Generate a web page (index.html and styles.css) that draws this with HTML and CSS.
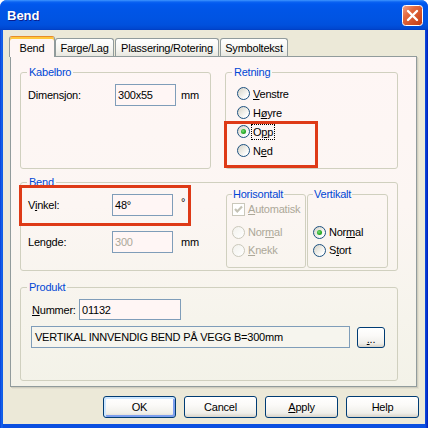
FILE: index.html
```html
<!DOCTYPE html>
<html>
<head>
<meta charset="utf-8">
<title>Bend</title>
<link rel="stylesheet" href="styles.css">
</head>
<body>
<div class="window">
  <div class="titlebar">
    <span class="title">Bend</span>
    <svg class="close" width="21" height="21" viewBox="0 0 21 21">
      <defs>
        <linearGradient id="cbg" x1="0" y1="0" x2="1" y2="1">
          <stop offset="0" stop-color="#F2A58C"/>
          <stop offset="0.35" stop-color="#E3693F"/>
          <stop offset="1" stop-color="#C23810"/>
        </linearGradient>
      </defs>
      <rect x="0.5" y="0.5" width="20" height="20" rx="3" fill="url(#cbg)" stroke="#fff"/>
      <path d="M6 6 L15 15 M15 6 L6 15" stroke="#fff" stroke-width="2.4" stroke-linecap="round"/>
    </svg>
  </div>
  <div class="client">
    <div class="tabs">
      <div class="tab active t1">Bend</div>
      <div class="tab t2">Farge/Lag</div>
      <div class="tab t3">Plassering/Rotering</div>
      <div class="tab t4">Symboltekst</div>
    </div>
    <div class="panel">
      <div class="row1">
        <fieldset class="group kabelbro">
          <legend>Kabelbro</legend>
          <div class="gbody kb-body">
            <div class="field">
              <span class="lbl lbl-dim">Dimensjon:</span>
              <span class="input in-dim">300x55</span>
              <span class="unit">mm</span>
            </div>
          </div>
        </fieldset>
        <fieldset class="group retning">
          <legend>Retning</legend>
          <div class="gbody ret-body">
            <div class="radio"><span class="rb"></span><span class="rt"><u>V</u>enstre</span></div>
            <div class="radio"><span class="rb"></span><span class="rt">H<u>ø</u>yre</span></div>
            <div class="radio"><span class="rb checked"></span><span class="rt focus">O<u>p</u>p</span></div>
            <div class="radio"><span class="rb"></span><span class="rt">N<u>e</u>d</span></div>
          </div>
        </fieldset>
      </div>

      <fieldset class="group bend">
        <legend>Bend</legend>
        <div class="bend-body">
          <div class="bend-left">
            <div class="field f-vinkel">
              <span class="lbl lbl-bend">V<u>i</u>nkel:</span>
              <span class="input in-bend">48°</span>
              <span class="unit unit-bend deg">°</span>
            </div>
            <div class="field f-lengde">
              <span class="lbl lbl-bend">Lengde:</span>
              <span class="input in-bend disabled">300</span>
              <span class="unit unit-bend">mm</span>
            </div>
          </div>
          <fieldset class="group horis">
            <legend>Horisontalt</legend>
            <div class="gbody hor-body">
              <div class="check disabled">
                <span class="cb"><svg width="11" height="11" viewBox="0 0 11 11"><path d="M2 5 L4.3 7.5 L9 2.5" fill="none" stroke="#C4C2B4" stroke-width="2.2"/></svg></span>
                <span class="rt"><u>A</u>utomatisk</span>
              </div>
              <div class="radio disabled r-first"><span class="rb"></span><span class="rt">Nor<u>m</u>al</span></div>
              <div class="radio disabled"><span class="rb"></span><span class="rt"><u>K</u>nekk</span></div>
            </div>
          </fieldset>
          <fieldset class="group vert">
            <legend>Vertikalt</legend>
            <div class="gbody vert-body">
              <div class="radio"><span class="rb checked"></span><span class="rt">Nor<u>m</u>al</span></div>
              <div class="radio"><span class="rb"></span><span class="rt">S<u>t</u>ort</span></div>
            </div>
          </fieldset>
        </div>
      </fieldset>

      <fieldset class="group produkt">
        <legend>Produkt</legend>
        <div class="gbody prod-body">
          <div class="field f-num">
            <span class="lbl lbl-num"><u>N</u>ummer:</span>
            <span class="input in-num">01132</span>
          </div>
          <div class="desc-row">
            <span class="input desc">VERTIKAL INNVENDIG BEND PÅ VEGG B=300mm</span>
            <span class="btn small"><u>.</u>..</span>
          </div>
        </div>
      </fieldset>

      <div class="mark mark1"></div>
      <div class="mark mark2"></div>
    </div>
    <div class="buttons">
      <span class="btn default">OK</span>
      <span class="btn">Cancel</span>
      <span class="btn"><u>A</u>pply</span>
      <span class="btn">Help</span>
    </div>
  </div>
</div>
</body>
</html>
```

FILE: styles.css
```css
* { box-sizing: border-box; }
html, body { margin: 0; padding: 0; }
body {
  width: 428px;
  height: 428px;
  background: #ffffff;
  font-family: "Liberation Sans", Arial, sans-serif;
  font-size: 11px;
  letter-spacing: -0.22px;
  color: #000;
  overflow: hidden;
}
u { text-decoration: underline; text-decoration-thickness: 1px; text-underline-offset: 1px; }

.window {
  width: 428px;
  height: 428px;
  display: flex;
  flex-direction: column;
  background: linear-gradient(to right, #0A3FD8 0, #166AEE 2px, #0A4FE0 3px, #0A4FE0 425px, #0A3CD6 426px, #0021B8 428px);
  border-radius: 7px 7px 0 0;
  overflow: hidden;
}

.titlebar {
  height: 30px;
  flex: none;
  display: flex;
  align-items: center;
  justify-content: space-between;
  padding: 0 5px 0 7px;
  background: linear-gradient(#3E95FF 0, #0A62F2 2px, #0058EE 4px, #0055E7 10px, #0054E3 18px, #0050DD 25px, #0046CF 29px, #003BBE 30px);
}
.title {
  color: #fff;
  font-weight: bold;
  font-size: 13px;
  letter-spacing: 0;
  text-shadow: 1px 1px 0 #0A1E8E;
  margin-top: 1px;
}
.close { display: block; }

.client {
  flex: 1;
  margin: 0 3px 4px 3px;
  background: #ECE9D8;
  padding-top: 6px;
  display: flex;
  flex-direction: column;
}

/* tabs */
.tabs {
  display: flex;
  align-items: flex-start;
  height: 20px;
  margin-left: 6px;
  position: relative;
  z-index: 2;
}
.tab {
  height: 18px;
  margin-top: 2px;
  border: 1px solid #919B9C;
  border-bottom: none;
  border-radius: 3px 3px 0 0;
  background: linear-gradient(#FFFFFF, #F6F5F1 60%, #E8E7E0);
  display: flex;
  align-items: center;
  justify-content: center;
  padding-top: 1px;
}
.tab.active {
  height: 21px;
  margin-top: 0;
  background: #FEF6F5;
  border-top: 1px solid #E68B2C;
  box-shadow: inset 0 2px 0 #FFC83C;
  padding-top: 1px;
  align-items: center;
}
.t1 { width: 46px; }
.t2 { width: 59px; }
.t3 { width: 104px; margin-left: 1px; }
.t4 { width: 68px; margin-left: 1px; }

/* panel */
.panel {
  position: relative;
  margin-left: 7px;
  width: 407px;
  height: 331px;
  flex: none;
  border: 1px solid #919B9C;
  background: linear-gradient(#FEF6F5 0%, #FCF6F3 45%, #F6F4EC 80%, #F3F2E8 100%);
  box-shadow: 1px 1px 0 #D0CEBF, 2px 2px 0 #E2DFD0;
  padding: 9px 0 0 9px;
  display: flex;
  flex-direction: column;
}

.group {
  margin: 0;
  padding: 0;
  border: 1px solid #D0D0BF;
  border-radius: 3px;
  min-width: 0;
}
.group legend {
  padding: 0 2px;
  margin-left: 6px;
  line-height: 13px;
  color: #0046D5;
}

.row1 { display: flex; }
.kabelbro { width: 191px; height: 103px; }
.retning { width: 173px; height: 103px; margin-left: 14px; }

.kb-body { padding: 5px 0 0 7px; }
.ret-body { padding: 5px 0 0 11px; }

.field { display: flex; align-items: center; height: 22px; }
.lbl { flex: none; }
.lbl-dim { width: 87px; }
.input {
  flex: none;
  display: flex;
  align-items: center;
  height: 22px;
  border: 1px solid #7F9DB9;
  background: #FFF6F5;
  padding-left: 2px;
  white-space: nowrap;
}
.input.disabled { color: #ACA899; }
.in-dim { width: 61px; }
.unit { margin-left: 5px; }

/* radios */
.radio, .check { display: flex; align-items: center; height: 19px; }
.rb {
  flex: none;
  position: relative;
  width: 13px;
  height: 13px;
  border-radius: 50%;
  border: 1px solid #1C5180;
  background: linear-gradient(135deg, #D4D1C6 0%, #EDECE6 45%, #FFFFFF 80%);
  margin-right: 3px;
}
.rb.checked::after {
  content: "";
  position: absolute;
  left: 3px;
  top: 3px;
  width: 5px;
  height: 5px;
  border-radius: 50%;
  background: radial-gradient(circle at 40% 40%, #7FE07F 0, #2AAE2A 50%, #1C8E1C 100%);
}
.radio.disabled { color: #ACA899; }
.radio.disabled .rb {
  border-color: #CAC8BB;
  background: linear-gradient(135deg, #F2F1EC, #FFFFFF);
}
.rt { white-space: nowrap; }
.rt.focus { outline: 1px dotted #000; outline-offset: 0; padding: 1px 1px 1px 1px; margin-left: -1px; }

.check { height: 16px; color: #ACA899; }
.cb {
  flex: none;
  width: 13px;
  height: 13px;
  border: 1px solid #CAC8BB;
  background: #FFFFFF;
  margin-right: 3px;
  display: flex;
  align-items: center;
  justify-content: center;
}
.cb svg { display: block; }

/* bend */
.bend { width: 378px; height: 95px; margin-top: 7px; }
.bend-body { display: flex; align-items: flex-start; }
.bend-left { width: 205px; flex: none; padding-left: 7px; }
.f-vinkel { margin-top: 5px; }
.f-lengde { margin-top: 15px; }
.lbl-bend { width: 84px; }
.in-bend { width: 61px; }
.unit-bend { margin-left: 8px; }
.deg { align-self: flex-start; margin-top: 2px; }

.horis { width: 80px; height: 80px; margin-top: -1px; flex: none; }
.vert { width: 81px; height: 80px; margin-top: -1px; margin-left: 1px; flex: none; }
.horis legend, .vert legend { margin-left: 5px; padding: 0 1px; }
.hor-body { padding: 0 0 0 5px; }
.hor-body .radio { height: 18px; }
.r-first { margin-top: 6px; }
.vert-body { padding: 22px 0 0 5px; }
.vert-body .radio { height: 18px; }

/* produkt */
.produkt { width: 378px; height: 100px; margin-top: 10px; }
.prod-body { padding: 0 0 0 11px; }
.f-num { margin-top: 5px; height: 21px; }
.lbl-num { width: 47px; }
.in-num { width: 102px; height: 21px; }
.desc-row { display: flex; align-items: flex-start; margin-top: 6px; margin-left: -1px; }
.desc { width: 319px; height: 22px; background: #F6F5EE; padding-left: 3px; }

.btn {
  flex: none;
  display: flex;
  align-items: center;
  justify-content: center;
  width: 73px;
  height: 22px;
  border: 1px solid #003C74;
  border-radius: 3px;
  background: linear-gradient(#FFFFFF 0%, #FBFAF8 40%, #F0EFEA 80%, #D8D3C8 100%);
}
.btn.small { width: 28px; height: 21px; margin-left: 7px; margin-top: 1px; padding-top: 2px; }
.btn.default {
  box-shadow: inset 1px 1px 0 1px #CEE7FF, inset -1px -1px 0 1px #7D9FEE;
}

.buttons {
  display: flex;
  justify-content: flex-end;
  gap: 8px;
  margin-top: 9px;
  padding-right: 6px;
}

/* red annotation marks */
.mark {
  position: absolute;
  border: 3px solid #DE3A17;
  pointer-events: none;
}
.mark1 { left: 213px; top: 64px; width: 94px; height: 47px; }
.mark2 { left: 8px; top: 128px; width: 172px; height: 41px; }
```
